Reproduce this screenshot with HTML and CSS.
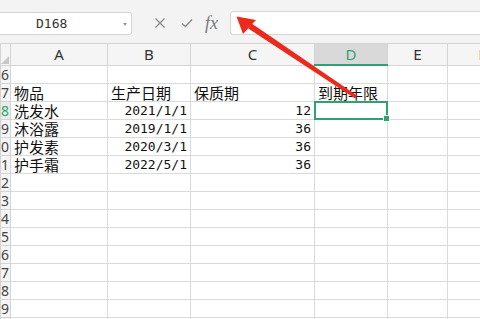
FILE: index.html
```html
<!DOCTYPE html>
<html lang="zh-CN">
<head>
    <meta charset="UTF-8">
    <title>表格</title>
    <link rel="stylesheet" href="styles.css">
</head>
<body>
    <div class="toolbar">
        <div class="name-box">
            <span class="cell-ref">D168</span>
            <span class="caret"></span>
        </div>
        <div class="formula-tools">
            <svg class="tool" width="12" height="12" viewBox="0 0 12 12"><path d="M1.5 1.5 L10.5 10.5 M10.5 1.5 L1.5 10.5" stroke="#8a8a8a" stroke-width="1.3" fill="none"/></svg>
            <svg class="tool" width="12" height="12" viewBox="0 0 12 12"><path d="M1 6.5 L4.5 9.5 L11 2.5" stroke="#8a8a8a" stroke-width="1.4" fill="none"/></svg>
            <span class="fx">fx</span>
        </div>
        <div class="formula-input"></div>
    </div>

    <table class="sheet">
        <colgroup>
            <col class="w-row"><col class="w-a"><col class="w-b"><col class="w-c"><col class="w-d"><col class="w-e"><col class="w-f">
        </colgroup>
        <thead>
            <tr>
                <th class="corner"><span class="corner-mark"></span></th>
                <th>A</th><th>B</th><th>C</th><th class="active-col">D</th><th>E</th><th>F</th>
            </tr>
        </thead>
        <tbody>
            <tr><th>6</th><td></td><td></td><td></td><td></td><td></td><td></td></tr>
            <tr><th>7</th><td class="txt">物品</td><td class="txt">生产日期</td><td class="txt">保质期</td><td class="txt">到期年限</td><td></td><td></td></tr>
            <tr><th class="active-row">8</th><td class="txt">洗发水</td><td class="num">2021/1/1</td><td class="num">12</td><td class="selected"></td><td></td><td></td></tr>
            <tr><th>9</th><td class="txt">沐浴露</td><td class="num">2019/1/1</td><td class="num">36</td><td></td><td></td><td></td></tr>
            <tr><th>10</th><td class="txt">护发素</td><td class="num">2020/3/1</td><td class="num">36</td><td></td><td></td><td></td></tr>
            <tr><th>11</th><td class="txt">护手霜</td><td class="num">2022/5/1</td><td class="num">36</td><td></td><td></td><td></td></tr>
            <tr><th>12</th><td></td><td></td><td></td><td></td><td></td><td></td></tr>
            <tr><th>13</th><td></td><td></td><td></td><td></td><td></td><td></td></tr>
            <tr><th>14</th><td></td><td></td><td></td><td></td><td></td><td></td></tr>
            <tr><th>15</th><td></td><td></td><td></td><td></td><td></td><td></td></tr>
            <tr><th>16</th><td></td><td></td><td></td><td></td><td></td><td></td></tr>
            <tr><th>17</th><td></td><td></td><td></td><td></td><td></td><td></td></tr>
            <tr><th>18</th><td></td><td></td><td></td><td></td><td></td><td></td></tr>
            <tr><th>19</th><td></td><td></td><td></td><td></td><td></td><td></td></tr>
            <tr><th>20</th><td></td><td></td><td></td><td></td><td></td><td></td></tr>
        </tbody>
    </table>

    <!-- red annotation arrow pointing at the formula bar -->
    <svg class="arrow" width="480" height="319" viewBox="0 0 480 319">
        <polygon points="248.3,28.5 251.7,23.5 357,95.5 355,98.5" fill="#ec2a1c"/>
        <polygon points="236.5,16.5 256,20 243,34" fill="#ec2a1c"/>
    </svg>
</body>
</html>
```

FILE: styles.css
```css
html, body {
    margin: 0;
    padding: 0;
}

body {
    width: 480px;
    height: 319px;
    overflow: hidden;
    position: relative;
    background-color: #fff;
    font-family: "Noto Sans", "Noto Sans CJK SC", sans-serif;
}

.toolbar {
    height: 43px;
    box-sizing: border-box;
    padding-top: 11px;
    background-color: #f3f3f3;
    display: flex;
    align-items: flex-start;
}

.name-box {
    width: 132px;
    height: 23px;
    box-sizing: border-box;
    margin-top: 1px;
    background-color: #fff;
    border: 1px solid #d6d6d6;
    border-left: none;
    border-radius: 0 3px 3px 0;
    display: flex;
    align-items: center;
    position: relative;
}

.cell-ref {
    padding-left: 36px;
    font-family: "DejaVu Sans Mono", monospace;
    font-size: 13px;
    color: #333;
}

.caret {
    position: absolute;
    right: 4px;
    top: 10px;
    border-left: 2px solid transparent;
    border-right: 2px solid transparent;
    border-top: 3px solid #999;
}

.formula-tools {
    width: 98px;
    height: 24px;
    display: flex;
    align-items: center;
    padding-left: 22px;
    box-sizing: border-box;
    gap: 15px;
}

.fx {
    font-family: "Liberation Serif", serif;
    font-style: italic;
    font-size: 18px;
    color: #7a7a7a;
    margin-left: -3px;
    line-height: 18px;
}

.formula-input {
    flex: 1;
    height: 24px;
    box-sizing: border-box;
    margin-right: -10px;
    background-color: #fff;
    border: 1px solid #d6d6d6;
    border-radius: 3px;
}

.sheet {
    border-collapse: collapse;
    table-layout: fixed;
    width: 517px;
}

.w-row { width: 10px; }
.w-a { width: 97px; }
.w-b { width: 83px; }
.w-c { width: 124px; }
.w-d { width: 73px; }
.w-e { width: 60px; }
.w-f { width: 70px; }

.sheet th,
.sheet td {
    padding: 0;
    border: 1px solid #dadada;
    white-space: nowrap;
    overflow: hidden;
}

.sheet thead th {
    height: 20px;
    background-color: #f5f5f5;
    border-color: #d4d4d4;
    font-weight: normal;
    font-size: 15px;
    color: #333;
    line-height: 19px;
}

.sheet thead th.active-col {
    background-color: #d9d9d9;
    color: #2fa36f;
    border-bottom: 2px solid #2fa36f;
}

.corner {
    position: relative;
}

.corner-mark {
    position: absolute;
    right: 1px;
    bottom: 1px;
    border-left: 8px solid transparent;
    border-bottom: 8px solid #c8c8c8;
}

.sheet tbody tr {
    height: 18px;
}

.sheet tbody th {
    background-color: #f5f5f5;
    border-color: #d4d4d4;
    font-weight: normal;
    font-size: 14px;
    color: #444;
    text-align: right;
    direction: rtl;
    line-height: 17px;
    padding-right: 1px;
}

.sheet tbody th.active-row {
    color: #2fa36f;
    background-color: #e9ece9;
}

.sheet td {
    height: 17px;
    font-size: 15px;
    line-height: 17px;
    color: #111;
}

.txt {
    font-family: "Noto Sans CJK SC", sans-serif;
    padding-left: 3px !important;
}

.num {
    font-family: "DejaVu Sans Mono", monospace;
    font-size: 13px !important;
    text-align: right;
    padding-right: 3px !important;
}

.sheet td.selected {
    position: relative;
    overflow: visible;
}

.selected::after {
    content: "";
    position: absolute;
    top: -1px;
    left: -1px;
    right: -1px;
    bottom: -1px;
    border: 2px solid #2fa36f;
}

.selected::before {
    content: "";
    position: absolute;
    right: -3px;
    bottom: -3px;
    width: 5px;
    height: 5px;
    background-color: #2fa36f;
    border: 1px solid #fff;
    z-index: 1;
}

.arrow {
    position: absolute;
    left: 0;
    top: 0;
}
```
